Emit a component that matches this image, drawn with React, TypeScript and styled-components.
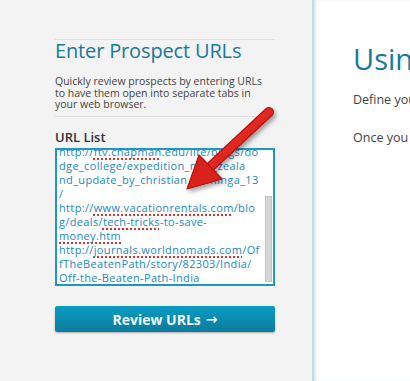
import styled, { createGlobalStyle } from "styled-components";

const GlobalStyle = createGlobalStyle`
  html, body {
    margin: 0;
    padding: 0;
    overflow: hidden;
  }
  body {
    font-family: "Open Sans", "Liberation Sans", sans-serif;
    background: #ffffff;
  }
`;

const Page = styled.div`
  display: flex;
  width: 410px;
  height: 381px;
  position: relative;
  overflow: hidden;
`;

const Sidebar = styled.aside`
  width: 312px;
  flex-shrink: 0;
  background: #f3f3f3;
  padding: 39px 37px 0 55px;
  box-sizing: border-box;
`;

const Intro = styled.section`
  border-top: 1px solid #dedede;
  border-bottom: 1px solid #dedede;
  padding-bottom: 5px;
`;

const Heading = styled.h2`
  margin: 0;
  font-size: 20px;
  line-height: 20px;
  font-weight: 400;
  color: #17799b;
  letter-spacing: -0.15px;
  padding-top: 1px;
`;

const Blurb = styled.p`
  margin: 15px 0 0;
  font-size: 10.5px;
  line-height: 11.7px;
  color: #444;
`;

const FieldLabel = styled.label`
  display: block;
  margin-top: 12px;
  font-size: 13px;
  line-height: 16px;
  font-weight: 600;
  color: #333;
`;

const UrlBox = styled.div`
  margin-top: 3px;
  height: 138px;
  border: 2px solid #1c97c6;
  background: #fff;
  box-sizing: border-box;
  display: flex;
  overflow: hidden;
`;

const UrlText = styled.div`
  flex: 1;
  margin-top: -5px;
  padding-left: 2px;
  font-size: 11px;
  line-height: 14px;
  letter-spacing: 0.35px;
  color: #2189c2;
  white-space: pre;
`;

const Misspelt = styled.span`
  text-decoration: underline dotted #e0302a;
  text-decoration-thickness: 1.5px;
  text-underline-offset: 2px;
  text-decoration-skip-ink: none;
`;

const ScrollTrack = styled.div`
  width: 7px;
  flex-shrink: 0;
  margin-right: 1px;
  padding-top: 46px;
  padding-bottom: 2px;
  box-sizing: border-box;
  display: flex;
`;

const ScrollThumb = styled.div`
  flex: 1;
  background: #d6d6d6;
  border: 1px solid #c2c2c2;
`;

const ReviewButton = styled.button`
  display: flex;
  align-items: center;
  justify-content: center;
  gap: 5px;
  width: 220px;
  height: 26px;
  margin-top: 20px;
  border: 0;
  border-radius: 2px;
  background: linear-gradient(#0a9cc3, #0b7b9c);
  box-shadow: 0 1px 2px rgba(0, 0, 0, 0.3);
  color: #f2f6f8;
  font-family: "Open Sans", "Liberation Sans", sans-serif;
  font-size: 14px;
  font-weight: 700;
  padding: 0;
  cursor: pointer;
`;

const ButtonArrow = styled.span`
  font-family: "DejaVu Sans", sans-serif;
  font-size: 14px;
  font-weight: 700;
  line-height: 1;
  margin-top: -1px;
`;

const Main = styled.main`
  flex: 1;
  border-left: 2px solid #c4dbe6;
  box-shadow: inset 2px 0 2px rgba(120, 170, 195, 0.25);
  padding: 41px 0 0 39px;
  white-space: nowrap;
  overflow: hidden;
`;

const MainTitle = styled.h1`
  margin: 0;
  font-size: 29px;
  line-height: 36px;
  font-weight: 400;
  color: #17799b;
`;

const MainText = styled.p`
  margin: 15px 0 0;
  font-size: 12.5px;
  line-height: 16px;
  color: #444;

  & + & {
    margin-top: 22px;
  }
`;

const Pointer = styled.svg`
  position: absolute;
  left: 0;
  top: 0;
  pointer-events: none;
`;

function RedArrow() {
  // tail (269,112) -> tip (187,189)
  return (
    <Pointer width="410" height="381" viewBox="0 0 410 381">
      <defs>
        <linearGradient id="shaft" x1="0" y1="0" x2="1" y2="1">
          <stop offset="0" stopColor="#f23a30" />
          <stop offset="1" stopColor="#cc1610" />
        </linearGradient>
        <filter id="drop" x="-20%" y="-20%" width="140%" height="140%">
          <feDropShadow dx="2" dy="3" stdDeviation="2" floodColor="#000" floodOpacity="0.35" />
        </filter>
      </defs>
      <g filter="url(#drop)">
        <line x1="269" y1="112" x2="208" y2="169" stroke="#b5120e" strokeWidth="10" strokeLinecap="round" />
        <line x1="269" y1="112" x2="208" y2="169" stroke="url(#shaft)" strokeWidth="7.5" strokeLinecap="round" />
        <polygon points="187,189 222,179 199,155" fill="#da221b" stroke="#b5120e" strokeWidth="1.2" strokeLinejoin="round" />
      </g>
    </Pointer>
  );
}

export default function App() {
  return (
    <>
      <GlobalStyle />
      <Page>
        <Sidebar>
          <Intro>
            <Heading>Enter Prospect URLs</Heading>
            <Blurb>
              Quickly review prospects by entering URLs
              <br />
              to have them open into separate tabs in
              <br />
              your web browser.
            </Blurb>
          </Intro>
          <FieldLabel>URL List</FieldLabel>
          <UrlBox>
            <UrlText>
              {"http://"}<Misspelt>ftv.chapman</Misspelt>{".edu/life/blogs/do\n"}
              {"dge_college/expedition_new_zeala\n"}
              {"nd_update_by_christian_dominga_13\n"}
              {"/\n"}
              {"http://"}<Misspelt>www.vacationrentals.com</Misspelt>{"/blo\n"}
              {"g/deals/"}<Misspelt>tech-tricks</Misspelt>{"-to-save-\n"}
              <Misspelt>money.htm</Misspelt>{"\n"}
              {"http://"}<Misspelt>journals.worldnomads.com</Misspelt>{"/Of\n"}
              {"fTheBeatenPath/story/82303/India/\n"}
              {"Off-the-Beaten-Path-India"}
            </UrlText>
            <ScrollTrack>
              <ScrollThumb />
            </ScrollTrack>
          </UrlBox>
          <ReviewButton>
            Review URLs <ButtonArrow>→</ButtonArrow>
          </ReviewButton>
        </Sidebar>
        <Main>
          <MainTitle>Using Prospect Review</MainTitle>
          <MainText>Define your prospecting criteria</MainText>
          <MainText>Once you have a list of URLs</MainText>
        </Main>
        <RedArrow />
      </Page>
    </>
  );
}
